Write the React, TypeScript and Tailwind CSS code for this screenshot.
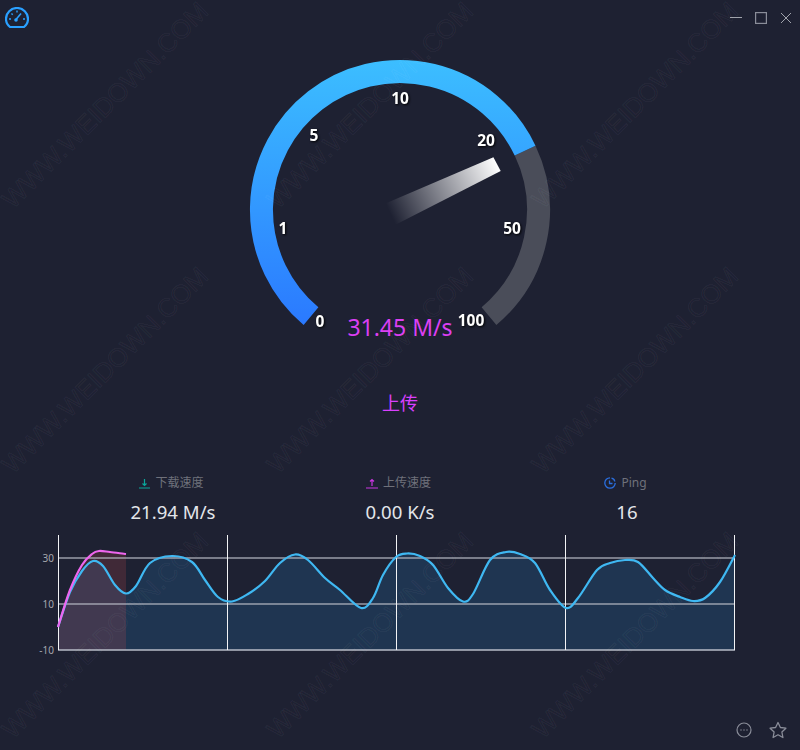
import React from "react";

const FONT = '"Noto Sans","Noto Sans CJK SC",sans-serif';

type P = [number, number];

const blue: P[] = [
  [58, 627], [70, 592], [82, 571], [93, 561], [103, 566], [115, 585], [126, 593.5], [136, 586], [150, 563], [172, 556], [192, 562], [205, 580],
  [218, 597], [232, 601.5], [248, 594], [265, 581], [280, 563], [295, 554.5], [308, 560], [325, 578], [340, 590], [361, 608], [373, 598],
  [383, 575], [396, 557], [407, 553.5], [420, 556], [433, 565], [448, 588], [463, 601.5], [473, 594], [490, 560], [506, 552], [520, 554], [535, 563],
  [550, 590], [566, 608], [578, 598], [597, 570], [610, 563], [625, 560], [638, 562], [653, 578], [665, 590], [680, 597], [693, 601], [705, 598], [720, 582], [735, 555],
];
const pink: P[] = [[58, 627], [70, 590], [82, 565], [92, 554], [99, 551], [110, 552], [126, 554]];

function curve(pts: P[]) {
  let d = `M${pts[0][0]} ${pts[0][1]}`;
  for (let i = 0; i < pts.length - 1; i++) {
    const p0 = pts[Math.max(0, i - 1)];
    const p1 = pts[i];
    const p2 = pts[i + 1];
    const p3 = pts[Math.min(pts.length - 1, i + 2)];
    const c1x = p1[0] + (p2[0] - p0[0]) / 6;
    const c1y = p1[1] + (p2[1] - p0[1]) / 6;
    const c2x = p2[0] - (p3[0] - p1[0]) / 6;
    const c2y = p2[1] - (p3[1] - p1[1]) / 6;
    d += ` C${c1x.toFixed(1)} ${c1y.toFixed(1)} ${c2x.toFixed(1)} ${c2y.toFixed(1)} ${p2[0]} ${p2[1]}`;
  }
  return d;
}

const ticks: [string, number, number][] = [
  ["0", 320, 327], ["1", 283, 234], ["5", 314, 141], ["10", 400, 104], ["20", 486, 146], ["50", 512, 234], ["100", 471, 326],
];

function Gauge() {
  return (
    <svg viewBox="0 40 800 305" className="block w-[800px] h-[305px]">
      <defs>
        <linearGradient id="arc" gradientUnits="userSpaceOnUse" x1="0" y1="60" x2="0" y2="330">
          <stop offset="0" stopColor="#3cbeff" />
          <stop offset="1" stopColor="#2a78ff" />
        </linearGradient>
        <linearGradient id="needle" gradientUnits="userSpaceOnUse" x1="390.5" y1="214" x2="497" y2="164">
          <stop offset="0" stopColor="#ffffff" stopOpacity="0" />
          <stop offset="1" stopColor="#ffffff" />
        </linearGradient>
      </defs>
      <path d="M525.1 150.6 A138.5 138.5 0 0 1 489 316.1" fill="none" stroke="#4a4d59" strokeWidth="23" />
      <path d="M311 316.1 A138.5 138.5 0 1 1 525.1 150.6" fill="none" stroke="url(#arc)" strokeWidth="23" />
      <polygon points="493.4,157.3 500.7,171 395,225 386,203.3" fill="url(#needle)" />
      {ticks.map(([t, x, y]) => (
        <text key={t} x={x} y={y} textAnchor="middle" fill="#ffffff" fontSize="15.5" fontWeight="700" fontFamily={FONT} className="drop-shadow-[1px_1px_1px_rgba(0,0,0,0.95)]">
          {t}
        </text>
      ))}
      <text x="400" y="336" textAnchor="middle" fill="#dc3ff2" fontSize="23" fontFamily={FONT}>31.45 M/s</text>
    </svg>
  );
}

function Chart() {
  const line = curve(blue);
  const pinkLine = curve(pink);
  return (
    <svg viewBox="0 530 800 130" className="block w-[800px] h-[130px]">
      <path d={`${line} L735 650 L58 650 Z`} fill="#1f3551" />
      <path d={`${pinkLine} L126 650 L58 650 Z`} fill="#e0504f" fillOpacity="0.18" />
      {[558, 604].map((y) => (
        <line key={y} x1="58" x2="735" y1={y} y2={y} stroke="#b8bcc6" strokeOpacity="0.8" strokeWidth="1.5" />
      ))}
      <line x1="58" x2="735" y1="650" y2="650" stroke="#b9bdc8" strokeWidth="1.5" />
      {[58, 227, 396, 565, 734].map((x) => (
        <line key={x} x1={x + 0.5} x2={x + 0.5} y1="535" y2="650" stroke="#f2f3f5" />
      ))}
      <path d={line} fill="none" stroke="#3fb8f2" strokeWidth="2.2" />
      <path d={pinkLine} fill="none" stroke="#ee66ee" strokeWidth="2.2" />
      {([["30", 562], ["10", 608], ["-10", 654]] as [string, number][]).map(([t, y]) => (
        <text key={t} x="54" y={y} textAnchor="end" fill="#a5a7ad" fontSize="10" fontFamily={FONT}>{t}</text>
      ))}
    </svg>
  );
}

function Stat({ icon, label, value }: { icon: React.ReactNode; label: string; value: string }) {
  return (
    <div className="flex flex-col items-center w-[227px]">
      <div className="flex items-center gap-[5px] h-5 pr-[3px] text-[12px] text-[#6f717b]">
        {icon}
        <span>{label}</span>
      </div>
      <div className="mt-[6px] h-[26px] leading-[26px] text-[18.6px] text-[#e3e6ea]">{value}</div>
    </div>
  );
}

const marks = Array.from({ length: 9 }, (_, i) => i);

function Watermark() {
  return (
    <div className="absolute -left-[27px] -top-[27px] w-[827px] h-[777px] overflow-hidden pointer-events-none grid grid-cols-[repeat(3,265px)] grid-rows-[repeat(3,265px)]">
      {marks.map((i) => (
        <div key={i} className="flex items-center justify-center">
          <span className="-rotate-45 whitespace-nowrap text-[26px] font-['Liberation_Sans'] text-transparent [-webkit-text-stroke:1px_rgba(255,255,255,0.05)]">
            WWW.WEIDOWN.COM
          </span>
        </div>
      ))}
    </div>
  );
}

export default function App() {
  return (
    <div className="relative w-[800px] h-[750px] flex flex-col overflow-hidden bg-[#1e2132]" style={{ fontFamily: FONT }}>
      <div className="flex justify-between h-10 pl-[5px] pr-2 pt-[7px]">
        <svg width="24" height="21" viewBox="0 0 24 21" fill="none" stroke="#2aa0ff" strokeWidth="2.2">
          <path d="M5 20 H19 C21.5 18 23 15 23 12 A11 11 0 0 0 1 12 C1 15 2.5 18 5 20 Z" strokeLinejoin="round" />
          <path d="M11 12.5 L16 6.5" strokeWidth="1.6" />
          <circle cx="11" cy="13" r="1.8" fill="#2aa0ff" stroke="none" />
          <path d="M4 12h2M18 12h2M6.5 6.5l1.2 1.2M12 3.5v2" strokeWidth="1.4" />
        </svg>
        <div className="flex gap-[13px] pt-[5px]">
          <svg width="12" height="12" viewBox="0 0 12 12" stroke="#a0a3ac" fill="none"><path d="M0 5.5h12" /></svg>
          <svg width="12" height="12" viewBox="0 0 12 12" stroke="#8a8d99" fill="none" strokeWidth="1.2"><rect x="0.6" y="0.6" width="10.8" height="10.8" /></svg>
          <svg width="12" height="12" viewBox="0 0 12 12" stroke="#a0a3ac" fill="none"><path d="M1 1l10 10M11 1L1 11" /></svg>
        </div>
      </div>

      <Gauge />

      <div className="mt-[46px] h-6 leading-6 text-center text-[18px] text-[#d940ff]">上传</div>

      <div className="flex justify-center mt-[58px]">
        <Stat
          label="下载速度"
          value="21.94 M/s"
          icon={
            <svg width="11" height="11" viewBox="0 0 11 11" fill="none" stroke="#0aa69a" strokeWidth="1.2">
              <path d="M0 10h11M5.5 1v6.5M3.5 5.5l2 2 2-2" />
            </svg>
          }
        />
        <Stat
          label="上传速度"
          value="0.00 K/s"
          icon={
            <svg width="12" height="11" viewBox="0 0 12 11" fill="none" stroke="#c936e0" strokeWidth="1.2">
              <path d="M0 10h12M6 8V1.5M4 3.5l2-2 2 2" />
            </svg>
          }
        />
        <Stat
          label="Ping"
          value="16"
          icon={
            <svg width="12" height="12" viewBox="0 0 12 12" fill="none" stroke="#2a6fe0" strokeWidth="1.3">
              <path d="M6 .8A5.2 5.2 0 1 0 11.2 6" />
              <path d="M7.5 1.2A4 4 0 0 1 10.8 4.5" />
              <path d="M5.5 3.5V6.5H8.5" />
            </svg>
          }
        />
      </div>

      <div className="mt-[5px]">
        <Chart />
      </div>

      <div className="mt-auto flex justify-end gap-[16px] pr-[13px] pb-[10px]">
        <svg width="18" height="20" viewBox="0 0 18 20" fill="none" stroke="#8a8d99" strokeWidth="1.2">
          <circle cx="9" cy="10" r="7" />
          <circle cx="6" cy="10" r="0.7" fill="#8a8d99" stroke="none" />
          <circle cx="9" cy="10" r="0.7" fill="#8a8d99" stroke="none" />
          <circle cx="12" cy="10" r="0.7" fill="#8a8d99" stroke="none" />
        </svg>
        <svg width="18" height="20" viewBox="0 0 18 20" fill="none" stroke="#8a8d99" strokeWidth="1.3" strokeLinejoin="round">
          <path d="M9 2.5l2.4 5 5.5.7-4 3.8 1 5.5L9 14.8l-4.9 2.7 1-5.5-4-3.8 5.5-.7z" />
        </svg>
      </div>

      <Watermark />
    </div>
  );
}
